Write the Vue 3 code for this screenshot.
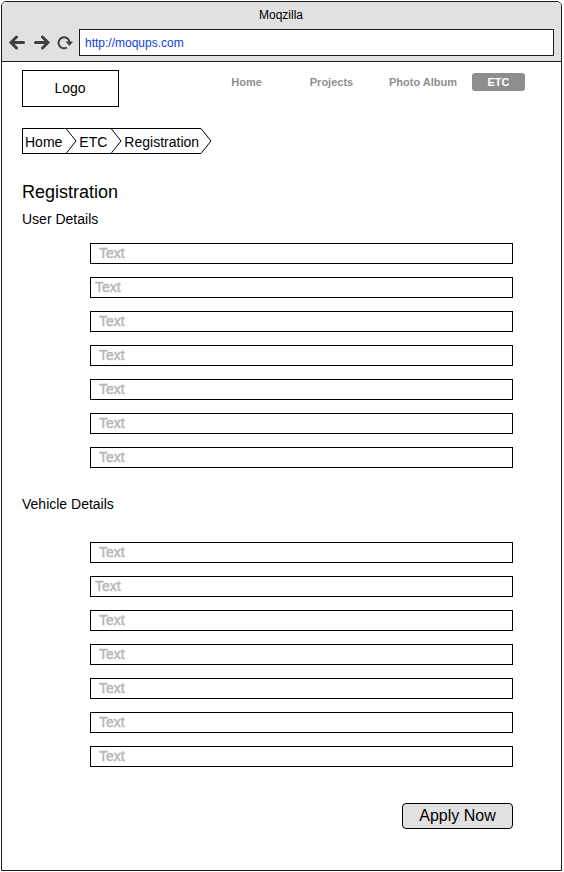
<script setup>
const navItems = [
  { label: 'Home', size: 'narrow' },
  { label: 'Projects', size: 'narrow' },
  { label: 'Photo Album', size: 'wide' },
  { label: 'ETC', active: true },
]
const crumbs = ['Home', 'ETC', 'Registration']
const sections = [
  { id: 'user', title: 'User Details' },
  { id: 'vehicle', title: 'Vehicle Details' },
]
const fieldCount = 7
</script>

<template>
  <div class="page">
    <div class="window">
      <header class="chrome">
        <div class="title">Moqzilla</div>
        <div class="toolbar">
          <button class="tool" type="button" aria-label="Back">
            <svg width="18" height="16" viewBox="0 0 18 16">
              <path d="M4 7.500H15.500M8.500 2L3 7.500L8.500 13" />
            </svg>
          </button>
          <button class="tool" type="button" aria-label="Forward">
            <svg width="18" height="16" viewBox="0 0 18 16">
              <path d="M3.500 7.500H15M10.500 2L16 7.500L10.500 13" />
            </svg>
          </button>
          <button class="tool" type="button" aria-label="Reload">
            <svg class="reload" width="17" height="16" viewBox="0 0 17 16">
              <path d="M11 12.500A5.500 5.500 0 1 1 13.500 7" />
              <path class="tip" d="M9.500 6.500H17L13.500 11Z" />
            </svg>
          </button>
          <input class="address" type="text" value="http://moqups.com" aria-label="Address" />
        </div>
      </header>

      <main class="content">
        <div class="masthead">
          <a class="logo" href="#">Logo</a>
          <nav class="menu">
            <a
              v-for="item in navItems"
              :key="item.label"
              href="#"
              :class="['menu-item', item.size, { active: item.active }]"
            >{{ item.label }}</a>
          </nav>
        </div>

        <ol class="crumbs">
          <li v-for="crumb in crumbs" :key="crumb" class="crumb">
            <a href="#">{{ crumb }}</a>
            <svg width="11" height="26" viewBox="0 0 11 26">
              <path d="M0 0.500L10 13L0 25.500" />
            </svg>
          </li>
        </ol>

        <h1>Registration</h1>

        <form @submit.prevent>
          <section v-for="section in sections" :key="section.id" :class="section.id">
            <h2>{{ section.title }}</h2>
            <div class="fields">
              <input
                v-for="n in fieldCount"
                :key="n"
                :class="['field', { tight: n === 2 }]"
                type="text"
                placeholder="Text"
                :aria-label="`${section.title} ${n}`"
              />
            </div>
          </section>
          <div class="actions">
            <button class="apply" type="submit">Apply Now</button>
          </div>
        </form>
      </main>
    </div>
  </div>
</template>

<style>
body {
  background: #fff;
}
</style>

<style scoped>
.page,
.page * {
  box-sizing: border-box;
}
.page {
  padding: 1px 2px 1px 1px;
  font-family: "Liberation Sans", Arial, sans-serif;
  font-size: 14px;
  line-height: 18px;
  color: #000;
}
.window {
  border: 1px solid #1c1c1c;
  border-radius: 5px 5px 0 0;
  overflow: hidden;
}
.chrome {
  background: #e1e1e1;
  border-bottom: 1px solid #1c1c1c;
  padding: 4px 7px 5px 6px;
}
.title {
  font-size: 12px;
  text-align: center;
  padding-bottom: 5px;
}
.toolbar {
  display: flex;
  align-items: center;
  gap: 6px;
}
.tool {
  display: flex;
  border: 0;
  padding: 0;
  background: none;
}
.tool path {
  fill: none;
  stroke: #404040;
  stroke-width: 3;
  stroke-linecap: round;
}
.tool .reload path {
  stroke-width: 2;
  stroke-linecap: butt;
}
.tool .reload .tip {
  fill: #404040;
  stroke: none;
}
.address {
  flex: 1;
  min-width: 0;
  height: 27px;
  border: 1px solid #1c1c1c;
  border-radius: 0;
  padding: 0 5px;
  background: #fff;
  font: inherit;
  font-size: 12px;
  color: #0b3fe0;
}
.content {
  padding: 8px 48px 41px 20px;
}
.masthead {
  display: flex;
  align-items: flex-start;
  justify-content: space-between;
  margin-right: -12px;
}
.logo {
  width: 97px;
  border: 1px solid #000;
  padding: 8px 1px 9px 0;
  text-align: center;
  color: #000;
  text-decoration: none;
}
.menu {
  display: flex;
  padding-top: 3px;
}
.menu-item {
  width: 53px;
  border-radius: 3px;
  font-size: 11px;
  font-weight: bold;
  text-align: center;
  white-space: nowrap;
  color: #8e8e8e;
  text-decoration: none;
}
.menu-item.narrow {
  width: 85px;
}
.menu-item.wide {
  width: 98px;
}
.menu-item.active {
  background: #8e8e8e;
  color: #fff;
}
.crumbs {
  display: flex;
  list-style: none;
  margin: 21px 0 0;
  padding: 0;
}
.crumb {
  display: flex;
  height: 26px;
  border: solid #000;
  border-width: 1px 0;
}
.crumb:first-child {
  border-left-width: 1px;
}
.crumb:last-child {
  border-width: 0;
}
.crumb a {
  padding: 4px 4px 2px 2px;
  color: #000;
  text-decoration: none;
}
.crumb:last-child a {
  border: solid #000;
  border-width: 1px 0;
  padding-right: 2px;
}
.crumb svg {
  margin: -1px 0;
}
.crumb:last-child svg {
  margin: 0;
}
.crumb path {
  fill: none;
  stroke: #000;
}
h1 {
  margin: 26px 0 0;
  font-size: 18px;
  font-weight: normal;
  line-height: 24px;
}
h2 {
  margin: 0;
  font-size: 14px;
  font-weight: normal;
}
.user {
  padding-top: 6px;
}
.vehicle {
  padding-top: 27px;
}
.fields {
  display: flex;
  flex-direction: column;
  gap: 13px;
  padding: 15px 0 0 68px;
}
.vehicle .fields {
  padding-top: 29px;
}
.field {
  width: 100%;
  height: 21px;
  border: 1px solid #000;
  border-radius: 0;
  padding: 0 8px 2px;
  background: #fff;
  font: inherit;
  color: #000;
}
.field.tight {
  padding: 0 4px 2px;
}
.field::placeholder {
  color: #b8b8b8;
  opacity: 1;
  -webkit-text-stroke: 0.5px #b8b8b8;
}
.actions {
  display: flex;
  justify-content: flex-end;
  padding-top: 36px;
}
.apply {
  min-width: 111px;
  height: 26px;
  border: 1px solid #000;
  border-radius: 4px;
  padding: 0 16px;
  background: #e1e1e1;
  font: inherit;
  font-size: 16px;
  color: #000;
}
</style>
